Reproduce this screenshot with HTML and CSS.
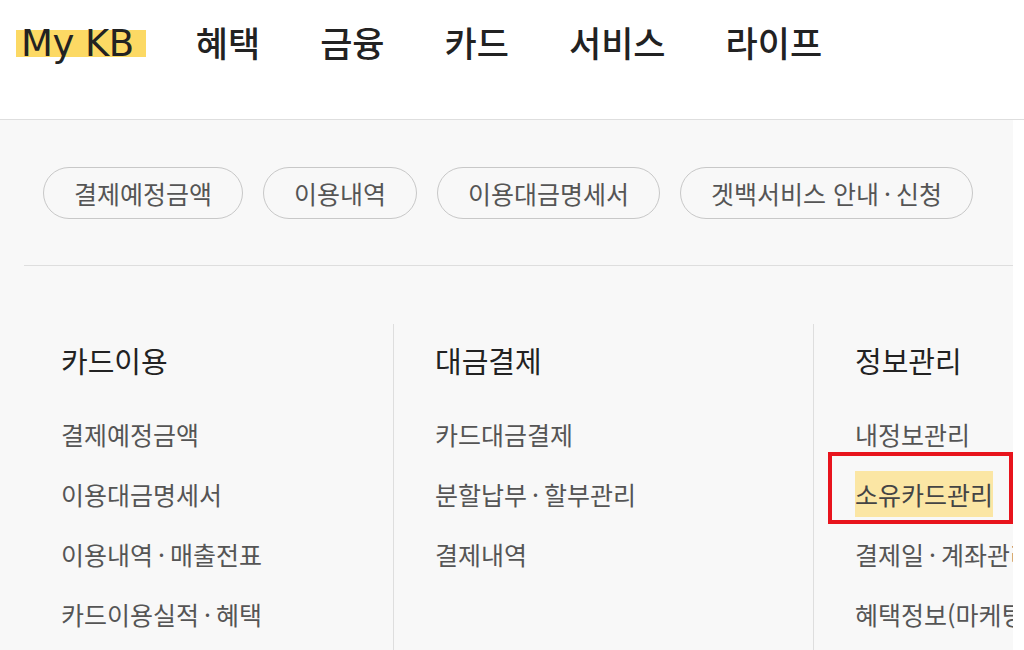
FILE: index.html
```html
<!DOCTYPE html>
<html lang="ko">
<head>
    <meta charset="UTF-8">
    <meta name="viewport" content="width=device-width, initial-scale=1.0">
    <title>My KB</title>
    <link rel="stylesheet" href="styles.css">
</head>
<body>
    <div class="gnb">
        <a class="mykb" href="#"><span>My KB</span></a>
        <a class="gnb-item" href="#">혜택</a>
        <a class="gnb-item" href="#">금융</a>
        <a class="gnb-item" href="#">카드</a>
        <a class="gnb-item" href="#">서비스</a>
        <a class="gnb-item" href="#">라이프</a>
    </div>
    <div class="panel">
        <div class="quick">
            <a class="pill" href="#">결제예정금액</a>
            <a class="pill" href="#">이용내역</a>
            <a class="pill" href="#">이용대금명세서</a>
            <a class="pill" href="#">겟백서비스 안내<span class="dot">·</span>신청</a>
        </div>
        <div class="menu">
            <div class="col">
                <h3>카드이용</h3>
                <ul>
                    <li>결제예정금액</li>
                    <li>이용대금명세서</li>
                    <li>이용내역<span class="dot">·</span>매출전표</li>
                    <li>카드이용실적<span class="dot">·</span>혜택</li>
                </ul>
            </div>
            <div class="col">
                <h3>대금결제</h3>
                <ul>
                    <li>카드대금결제</li>
                    <li>분할납부<span class="dot">·</span>할부관리</li>
                    <li>결제내역</li>
                </ul>
            </div>
            <div class="col">
                <h3>정보관리</h3>
                <ul>
                    <li>내정보관리</li>
                    <li class="mark"><span>소유카드관리</span></li>
                    <li>결제일<span class="dot">·</span>계좌관리</li>
                    <li>혜택정보(마케팅)동의</li>
                </ul>
            </div>
        </div>
    </div>
</body>
</html>
```

FILE: styles.css
```css
body{
    margin:0;
    background:#fff;
    font-family: "Noto Sans CJK KR", "Malgun Gothic", sans-serif;
    overflow:hidden;
}
a{
    text-decoration:none;
    color:inherit;
}
.gnb{
    height:120px;
    box-sizing:border-box;
    padding:22px 0 0 16px;
    display:flex;
    align-items:flex-start;
    gap:60px;
    border-bottom:1px solid #dedede;
    color:#222;
}
.mykb{
    margin-right:-10px;
}
.mykb span{
    display:inline-block;
    font-family: "DejaVu Sans", sans-serif;
    font-size:37px;
    line-height:27px;
    height:27px;
    padding:0 12px 0 5px;
    margin-top:8px;
    background:#fcd964;
    letter-spacing:-0.5px;
}
.gnb-item{
    font-size:35px;
    line-height:40px;
    font-weight:500;
}
.panel{
    width:1013px;
    height:530px;
    background:#f8f8f8;
    overflow:hidden;
}
.quick{
    margin-left:24px;
    padding:47px 0 46px 19px;
    display:flex;
    gap:20px;
    border-bottom:1px solid #dedede;
}
.pill{
    height:52px;
    box-sizing:border-box;
    border:1px solid #c8c8c8;
    border-radius:26px;
    padding:0 30px;
    display:flex;
    align-items:center;
    font-size:25px;
    color:#555;
    white-space:nowrap;
}
.dot{
    margin:0 5px;
}
.menu{
    margin-left:20px;
    padding-top:58px;
    display:grid;
    grid-template-columns:373px 420px 420px;
}
.col{
    padding:17px 0 0 41px;
    height:400px;
}
.col + .col{
    border-left:1px solid #dedede;
}
.col h3{
    margin:0;
    font-size:29px;
    line-height:38px;
    font-weight:400;
    color:#222;
}
.col ul{
    list-style:none;
    margin:25px 0 0;
    padding:0;
}
.col li{
    height:60px;
    line-height:60px;
    font-size:25px;
    color:#555;
    white-space:nowrap;
}
.mark{
    position:relative;
}
.mark span{
    background:#fbe6a4;
    padding:5px 0;
    color:#444;
}
.mark::after{
    content:"";
    position:absolute;
    top:-12px;
    left:-27px;
    width:185px;
    height:72px;
    box-sizing:border-box;
    border:4px solid #e8141d;
}
```
